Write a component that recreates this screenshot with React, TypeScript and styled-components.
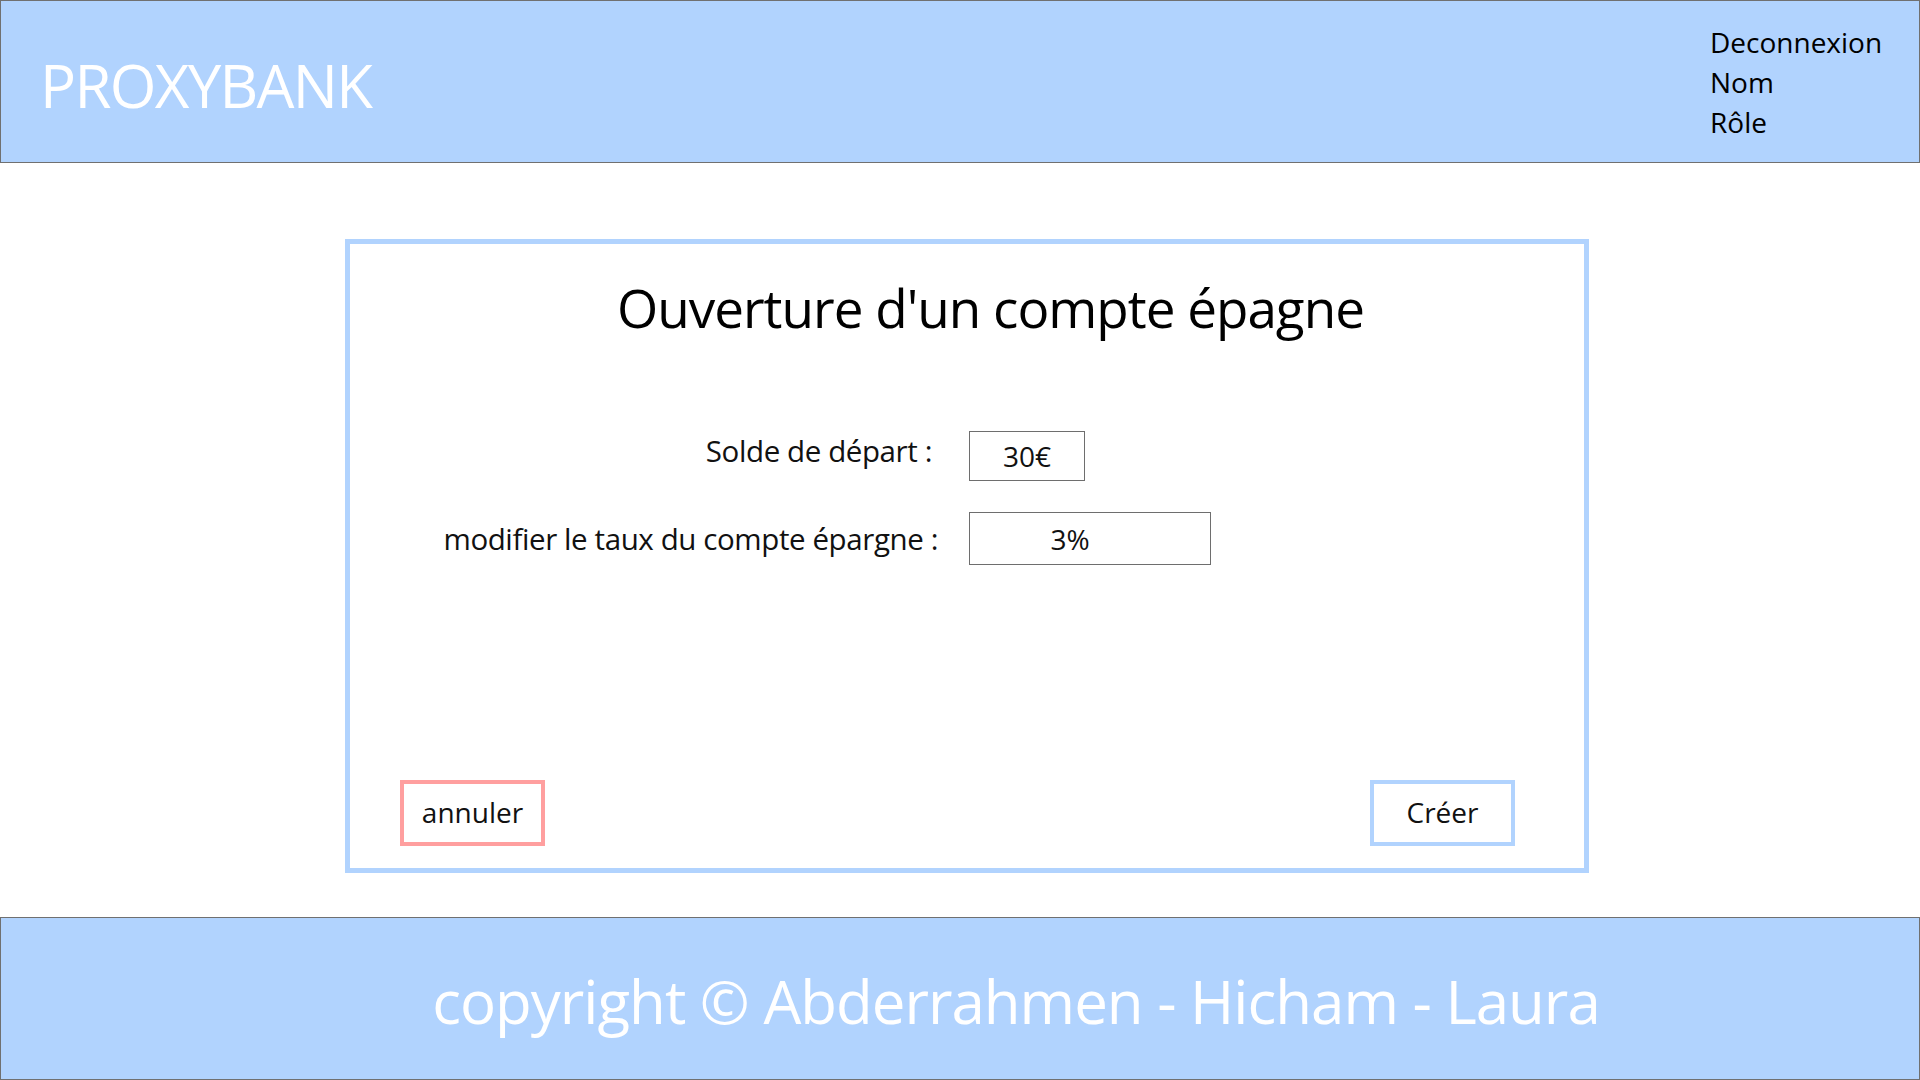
import styled, { createGlobalStyle } from "styled-components";

const GlobalStyle = createGlobalStyle`
  html, body {
    margin: 0;
    padding: 0;
    background: #ffffff;
    font-family: "Open Sans", "Noto Sans", sans-serif;
    color: #000000;
  }
  * {
    box-sizing: border-box;
  }
`;

export default function App() {
  return (
    <>
      <GlobalStyle />
      <Page>
        <Header>
          <Logo>PROXYBANK</Logo>
          <UserMenu>
            <MenuItem>Deconnexion</MenuItem>
            <MenuItem>Nom</MenuItem>
            <MenuItem>Rôle</MenuItem>
          </UserMenu>
        </Header>

        <Main>
          <Card>
            <Title>Ouverture d'un compte épagne</Title>
            <Form>
              <Label $shift={6} $top>
                Solde de départ :
              </Label>
              <Field $width={116} $height={50}>
                30€
              </Field>
              <Label>modifier le taux du compte épargne :</Label>
              <Field $width={242} $height={53} $offset={-40}>
                3%
              </Field>
            </Form>
            <Actions>
              <Button $color="#ff9f9f">annuler</Button>
              <Button $color="#b1d3fe">Créer</Button>
            </Actions>
          </Card>
        </Main>

        <Footer>
          <Copyright>copyright © Abderrahmen - Hicham - Laura</Copyright>
        </Footer>
      </Page>
    </>
  );
}

const Page = styled.div`
  display: flex;
  flex-direction: column;
  width: 1920px;
  height: 1080px;
  overflow: hidden;
`;

const Header = styled.header`
  flex: 0 0 163px;
  display: flex;
  align-items: center;
  justify-content: space-between;
  padding: 0 38px 0 39px;
  background: #b1d3fe;
  border: 1px solid #707070;
`;

const Logo = styled.h1`
  margin: 0;
  font-size: 60px;
  font-weight: 400;
  color: #ffffff;
  letter-spacing: -1.7px;
  padding-top: 6px;
`;

const UserMenu = styled.ul`
  list-style: none;
  margin: 0;
  padding: 0;
  width: 171px;
  display: flex;
  flex-direction: column;
`;

const MenuItem = styled.li`
  font-size: 28px;
  line-height: 40px;
  letter-spacing: 0;
  cursor: pointer;
`;

const Main = styled.main`
  flex: 1;
  display: flex;
  padding: 76px 331px 44px 345px;
`;

const Card = styled.section`
  flex: 1;
  display: flex;
  flex-direction: column;
  border: 5px solid #b1d3fe;
  padding: 28px 69px 22px 50px;
`;

const Title = styled.h2`
  margin: 0 0 0 217px;
  font-size: 53px;
  font-weight: 400;
  line-height: 72px;
  letter-spacing: -1px;
`;

const Form = styled.div`
  display: grid;
  grid-template-columns: 538px auto;
  column-gap: 31px;
  row-gap: 31px;
  align-items: center;
  margin-top: 87px;
`;

const Label = styled.span<{ $shift?: number; $top?: boolean }>`
  justify-self: end;
  align-self: ${(p) => (p.$top ? "start" : "center")};
  margin-right: ${(p) => p.$shift ?? 0}px;
  font-size: 29.5px;
  line-height: 40px;
  letter-spacing: -0.4px;
  color: #111111;
`;

const Field = styled.div<{ $width: number; $height: number; $offset?: number }>`
  width: ${(p) => p.$width}px;
  height: ${(p) => p.$height}px;
  display: flex;
  align-items: center;
  justify-content: center;
  padding-right: ${(p) => Math.max(0, -(p.$offset ?? 0))}px;
  border: 1.5px solid #6e6e6e;
  font-size: 28px;
  color: #111111;
`;

const Actions = styled.div`
  margin-top: auto;
  display: flex;
  justify-content: space-between;
`;

const Button = styled.button<{ $color: string }>`
  width: 145px;
  height: 66px;
  background: #ffffff;
  border: 4px solid ${(p) => p.$color};
  font-family: "Open Sans", "Noto Sans", sans-serif;
  font-size: 28px;
  color: #111111;
  padding: 0 0 2px;
  cursor: pointer;
`;

const Footer = styled.footer`
  flex: 0 0 163px;
  display: flex;
  align-items: center;
  justify-content: center;
  padding: 4px 0 0 112px;
  background: #b1d3fe;
  border: 1px solid #707070;
`;

const Copyright = styled.p`
  margin: 0;
  font-size: 60px;
  color: #ffffff;
  letter-spacing: -1px;
`;
